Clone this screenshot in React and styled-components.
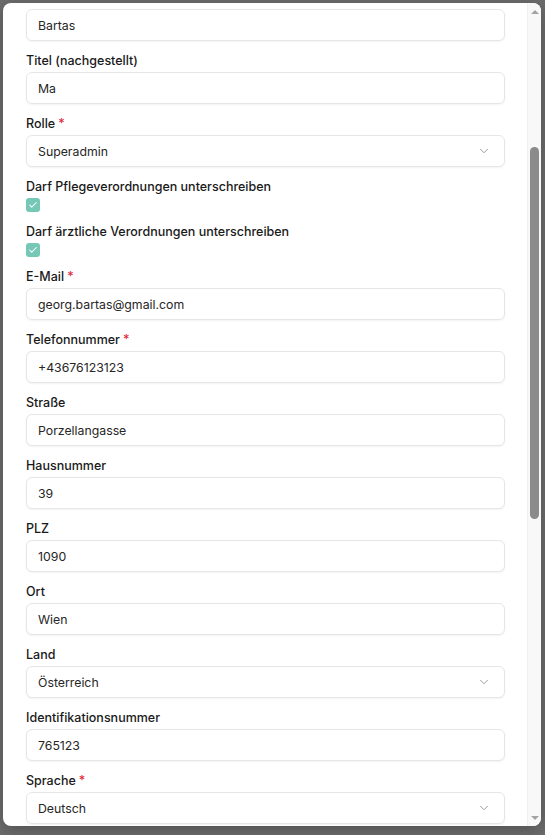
import React from 'react';
import styled, { createGlobalStyle } from 'styled-components';
import { ChevronDown, Check } from 'lucide-react';

const GlobalStyle = createGlobalStyle`
  html, body {
    margin: 0;
    padding: 0;
    background: #6c6c6c;
  }
  * {
    box-sizing: border-box;
  }
`;

const Page = styled.div`
  height: 835px;
  padding: 3px 4px 9px 3px;
  display: flex;
`;

const Panel = styled.div`
  flex: 1;
  display: flex;
  background: #fff;
  border-radius: 8px;
  overflow: hidden;
  box-shadow: 0 4px 16px rgba(0, 0, 0, 0.25);
`;

const Form = styled.div`
  flex: 1;
  padding: 6px 22px 0 23px;
  display: flex;
  flex-direction: column;
  gap: 9px;
  font-family: Inter, 'Noto Sans', sans-serif;
`;

const Field = styled.div`
  display: flex;
  flex-direction: column;
  gap: 1px;
`;

const Label = styled.label`
  padding-top: 1px;
  font-size: 12.5px;
  line-height: 20px;
  font-weight: 500;
  color: #1a1a1a;
`;

const Required = styled.span`
  color: #e3263a;
  margin-left: 3px;
`;

const Input = styled.div`
  height: 32px;
  display: flex;
  align-items: center;
  justify-content: space-between;
  padding: 0 13px 0 11px;
  border: 1px solid #e6e6e6;
  border-radius: 6px;
  box-shadow: 0 1px 2px rgba(0, 0, 0, 0.05);
  font-size: 12.3px;
  color: #262626;
  background: #fff;
`;

const Chevron = styled(ChevronDown)`
  color: #8f8f8f;
`;

const Box = styled.span`
  width: 14px;
  height: 14px;
  border-radius: 3px;
  background: #76c8b6;
  display: flex;
  align-items: center;
  justify-content: center;
  color: #fff;
`;

const Scrollbar = styled.div`
  width: 14px;
  display: flex;
  flex-direction: column;
  background: #f8f8f8;
  border-left: 1px solid #f0f0f0;
`;

const ArrowButton = styled.div`
  height: 17px;
  display: flex;
  align-items: center;
  justify-content: center;

  &::after {
    content: '';
    border-left: 4px solid transparent;
    border-right: 4px solid transparent;
    ${({ $down }) =>
      $down ? 'border-top: 4px solid #a3a3a3;' : 'border-bottom: 4px solid #a3a3a3;'}
  }
`;

const Track = styled.div`
  flex: 1;
  display: flex;
  flex-direction: column;
  align-items: center;
`;

const Thumb = styled.div`
  width: 9px;
  margin-top: 127px;
  height: 372px;
  border-radius: 5px;
  background: #8b8b8b;
`;

const fields = [
  { label: 'Titel (nachgestellt)', value: 'Ma' },
  { label: 'Rolle', value: 'Superadmin', required: true, select: true },
  { check: 'Darf Pflegeverordnungen unterschreiben' },
  { check: 'Darf ärztliche Verordnungen unterschreiben' },
  { label: 'E-Mail', value: 'georg.bartas@gmail.com', required: true },
  { label: 'Telefonnummer', value: '+43676123123', required: true },
  { label: 'Straße', value: 'Porzellangasse' },
  { label: 'Hausnummer', value: '39' },
  { label: 'PLZ', value: '1090' },
  { label: 'Ort', value: 'Wien' },
  { label: 'Land', value: 'Österreich', select: true },
  { label: 'Identifikationsnummer', value: '765123' },
  { label: 'Sprache', value: 'Deutsch', required: true, select: true },
];

export default function App() {
  return (
    <>
      <GlobalStyle />
      <Page>
        <Panel>
          <Form>
            <Input>Bartas</Input>
            {fields.map((f, i) =>
              f.check ? (
                <Field key={i}>
                  <Label>{f.check}</Label>
                  <Box>
                    <Check size={10} strokeWidth={2.5} />
                  </Box>
                </Field>
              ) : (
                <Field key={i}>
                  <Label>
                    {f.label}
                    {f.required && <Required>*</Required>}
                  </Label>
                  <Input>
                    {f.value}
                    {f.select && <Chevron size={14} strokeWidth={1.5} />}
                  </Input>
                </Field>
              )
            )}
          </Form>
          <Scrollbar>
            <ArrowButton />
            <Track>
              <Thumb />
            </Track>
            <ArrowButton $down />
          </Scrollbar>
        </Panel>
      </Page>
    </>
  );
}
